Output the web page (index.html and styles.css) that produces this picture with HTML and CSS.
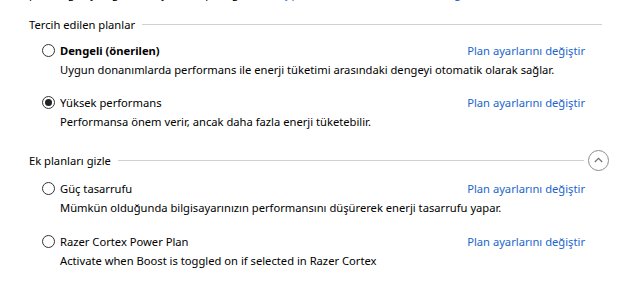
FILE: index.html
```html
<!DOCTYPE html>
<html lang="tr">
<head>
<meta charset="utf-8">
<link rel="stylesheet" href="styles.css">
</head>
<body>
<div class="page">
  <p class="intro">parlaklığı, uyku gibi) bir ayarlar topluluğudur. <a href="#" class="link">Güç planları hakkında daha fazla bilgi alın</a></p>

  <div class="group-head head-short">
    <span class="group-title">Tercih edilen planlar</span>
    <span class="rule"></span>
  </div>

  <div class="plan">
    <div class="plan-row">
      <span class="radio"></span>
      <span class="plan-name bold">Dengeli (önerilen)</span>
      <a href="#" class="link plan-link">Plan ayarlarını değiştir</a>
    </div>
    <div class="plan-desc">Uygun donanımlarda performans ile enerji tüketimi arasındaki dengeyi otomatik olarak sağlar.</div>
  </div>

  <div class="plan">
    <div class="plan-row">
      <span class="radio checked"></span>
      <span class="plan-name">Yüksek performans</span>
      <a href="#" class="link plan-link">Plan ayarlarını değiştir</a>
    </div>
    <div class="plan-desc">Performansa önem verir, ancak daha fazla enerji tüketebilir.</div>
  </div>

  <div class="group-head head-long">
    <span class="group-title">Ek planları gizle</span>
    <span class="rule"></span>
    <span class="collapse">
      <svg width="21" height="21" viewBox="0 0 21 21"><circle cx="10.5" cy="10.5" r="10" fill="none" stroke="#8c8c8c" stroke-width="1"/><path d="M6.8 12 L10.5 8.3 L14.2 12" fill="none" stroke="#707070" stroke-width="1.2"/></svg>
    </span>
  </div>

  <div class="plan first">
    <div class="plan-row">
      <span class="radio"></span>
      <span class="plan-name">Güç tasarrufu</span>
      <a href="#" class="link plan-link">Plan ayarlarını değiştir</a>
    </div>
    <div class="plan-desc">Mümkün olduğunda bilgisayarınızın performansını düşürerek enerji tasarrufu yapar.</div>
  </div>

  <div class="plan later">
    <div class="plan-row">
      <span class="radio"></span>
      <span class="plan-name">Razer Cortex Power Plan</span>
      <a href="#" class="link plan-link">Plan ayarlarını değiştir</a>
    </div>
    <div class="plan-desc">Activate when Boost is toggled on if selected in Razer Cortex</div>
  </div>
</div>
</body>
</html>
```

FILE: styles.css
```css
html, body {
  margin: 0;
  padding: 0;
  background: #ffffff;
}
body {
  font-family: "Noto Sans", "Open Sans", sans-serif;
  font-size: 11.2px;
  color: #000;
  overflow: hidden;
  width: 627px;
  height: 287px;
}
.page {
  padding-left: 24px;
  width: 580px;
}
.intro {
  margin: -14px 0 0 5px;
  line-height: 16px;
  white-space: nowrap;
}
.link {
  color: #1a66cc;
  text-decoration: none;
}
.intro .link {
  text-decoration: underline;
}
.group-head {
  display: flex;
  align-items: center;
  margin-left: 5px;
}
.head-short {
  margin-top: 14px;
  height: 16px;
  width: 573px;
}
.head-long {
  margin-top: 18px;
  height: 20px;
  width: 580px;
}
.group-title {
  white-space: nowrap;
}
.rule {
  flex: 1;
  height: 1px;
  background: #d0d0d0;
  margin-left: 7px;
}
.collapse {
  display: flex;
  margin-left: 4px;
}
.plan {
  margin-top: 12px;
  padding-left: 18px;
}
.head-short + .plan,
.plan.first {
  margin-top: 8px;
}
.plan.later {
  margin-top: 13px;
}
.plan-row {
  display: flex;
  align-items: center;
  height: 20px;
  width: 543px;
}
.radio {
  width: 11px;
  height: 11px;
  border: 1px solid #333;
  border-radius: 50%;
  margin-right: 5px;
  position: relative;
  box-sizing: content-box;
}
.radio.checked::after {
  content: "";
  position: absolute;
  left: 2px;
  top: 2px;
  width: 7px;
  height: 7px;
  border-radius: 50%;
  background: #222;
}
.plan-name {
  flex: 1;
  white-space: nowrap;
}
.bold {
  font-weight: bold;
}
.plan-desc {
  padding-left: 18px;
  line-height: 20px;
  white-space: nowrap;
}
```
